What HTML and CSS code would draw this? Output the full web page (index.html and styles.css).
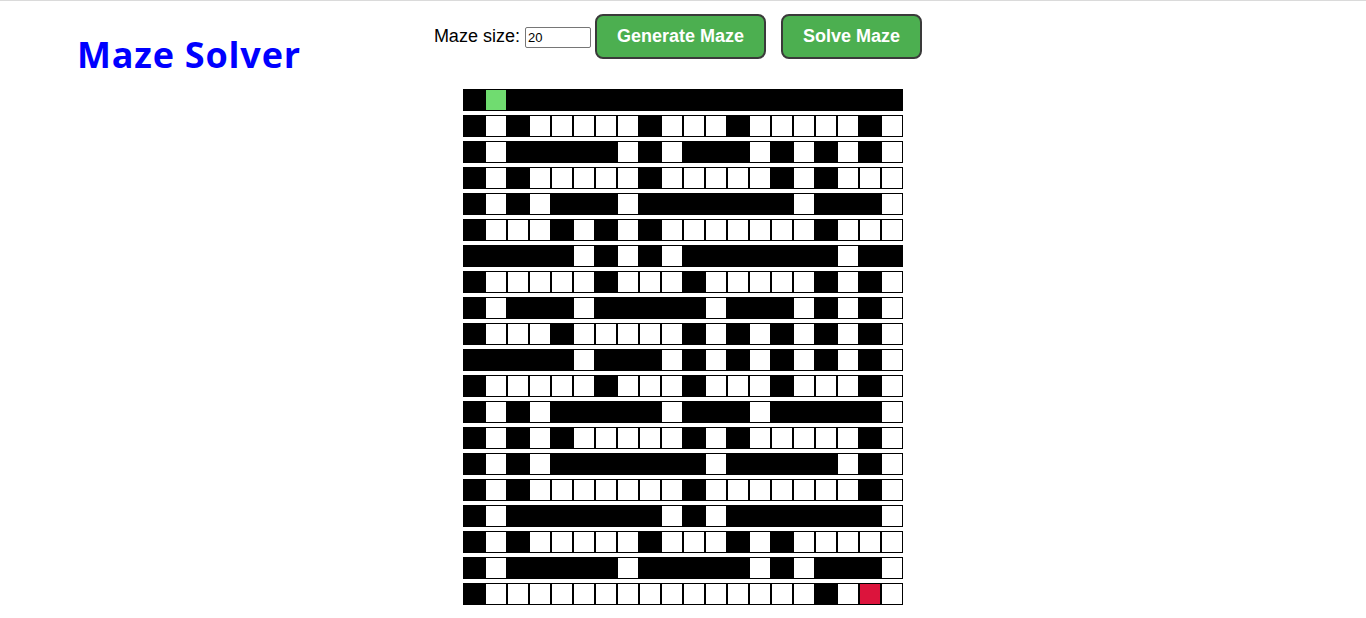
FILE: index.html
```html
<!DOCTYPE html>
<html lang="en">
<head>
<meta charset="utf-8">
<title>Maze Solver</title>
<link rel="stylesheet" href="styles.css">
</head>
<body>
<div class="header">
  <h1 class="title">Maze Solver</h1>
  <div class="controls">
    <label class="size-label" for="size">Maze size:</label>
    <input class="size-input" id="size" type="text" value="20">
    <button class="btn btn-generate">Generate Maze</button>
    <button class="btn btn-solve">Solve Maze</button>
  </div>
</div>
<div class="maze">
  <div class="row"><i></i><i class="start"></i><i></i><i></i><i></i><i></i><i></i><i></i><i></i><i></i><i></i><i></i><i></i><i></i><i></i><i></i><i></i><i></i><i></i><i></i></div>
  <div class="row"><i></i><i class="w"></i><i></i><i class="w"></i><i class="w"></i><i class="w"></i><i class="w"></i><i class="w"></i><i></i><i class="w"></i><i class="w"></i><i class="w"></i><i></i><i class="w"></i><i class="w"></i><i class="w"></i><i class="w"></i><i class="w"></i><i></i><i class="w"></i></div>
  <div class="row"><i></i><i class="w"></i><i></i><i></i><i></i><i></i><i></i><i class="w"></i><i></i><i class="w"></i><i></i><i></i><i></i><i class="w"></i><i></i><i class="w"></i><i></i><i class="w"></i><i></i><i class="w"></i></div>
  <div class="row"><i></i><i class="w"></i><i></i><i class="w"></i><i class="w"></i><i class="w"></i><i class="w"></i><i class="w"></i><i></i><i class="w"></i><i class="w"></i><i class="w"></i><i class="w"></i><i class="w"></i><i></i><i class="w"></i><i></i><i class="w"></i><i class="w"></i><i class="w"></i></div>
  <div class="row"><i></i><i class="w"></i><i></i><i class="w"></i><i></i><i></i><i></i><i class="w"></i><i></i><i></i><i></i><i></i><i></i><i></i><i></i><i class="w"></i><i></i><i></i><i></i><i class="w"></i></div>
  <div class="row"><i></i><i class="w"></i><i class="w"></i><i class="w"></i><i></i><i class="w"></i><i></i><i class="w"></i><i></i><i class="w"></i><i class="w"></i><i class="w"></i><i class="w"></i><i class="w"></i><i class="w"></i><i class="w"></i><i></i><i class="w"></i><i class="w"></i><i class="w"></i></div>
  <div class="row"><i></i><i></i><i></i><i></i><i></i><i class="w"></i><i></i><i class="w"></i><i></i><i class="w"></i><i></i><i></i><i></i><i></i><i></i><i></i><i></i><i class="w"></i><i></i><i></i></div>
  <div class="row"><i></i><i class="w"></i><i class="w"></i><i class="w"></i><i class="w"></i><i class="w"></i><i></i><i class="w"></i><i class="w"></i><i class="w"></i><i></i><i class="w"></i><i class="w"></i><i class="w"></i><i class="w"></i><i class="w"></i><i></i><i class="w"></i><i></i><i class="w"></i></div>
  <div class="row"><i></i><i class="w"></i><i></i><i></i><i></i><i class="w"></i><i></i><i></i><i></i><i></i><i></i><i class="w"></i><i></i><i></i><i></i><i class="w"></i><i></i><i class="w"></i><i></i><i class="w"></i></div>
  <div class="row"><i></i><i class="w"></i><i class="w"></i><i class="w"></i><i></i><i class="w"></i><i class="w"></i><i class="w"></i><i class="w"></i><i class="w"></i><i></i><i class="w"></i><i></i><i class="w"></i><i></i><i class="w"></i><i></i><i class="w"></i><i></i><i class="w"></i></div>
  <div class="row"><i></i><i></i><i></i><i></i><i></i><i class="w"></i><i></i><i></i><i></i><i class="w"></i><i></i><i class="w"></i><i></i><i class="w"></i><i></i><i class="w"></i><i></i><i class="w"></i><i></i><i class="w"></i></div>
  <div class="row"><i></i><i class="w"></i><i class="w"></i><i class="w"></i><i class="w"></i><i class="w"></i><i></i><i class="w"></i><i class="w"></i><i class="w"></i><i></i><i class="w"></i><i class="w"></i><i class="w"></i><i></i><i class="w"></i><i class="w"></i><i class="w"></i><i></i><i class="w"></i></div>
  <div class="row"><i></i><i class="w"></i><i></i><i class="w"></i><i></i><i></i><i></i><i></i><i></i><i class="w"></i><i></i><i></i><i></i><i class="w"></i><i></i><i></i><i></i><i></i><i></i><i class="w"></i></div>
  <div class="row"><i></i><i class="w"></i><i></i><i class="w"></i><i></i><i class="w"></i><i class="w"></i><i class="w"></i><i class="w"></i><i class="w"></i><i></i><i class="w"></i><i></i><i class="w"></i><i class="w"></i><i class="w"></i><i class="w"></i><i class="w"></i><i></i><i class="w"></i></div>
  <div class="row"><i></i><i class="w"></i><i></i><i class="w"></i><i></i><i></i><i></i><i></i><i></i><i></i><i></i><i class="w"></i><i></i><i></i><i></i><i></i><i></i><i class="w"></i><i></i><i class="w"></i></div>
  <div class="row"><i></i><i class="w"></i><i></i><i class="w"></i><i class="w"></i><i class="w"></i><i class="w"></i><i class="w"></i><i class="w"></i><i class="w"></i><i></i><i class="w"></i><i class="w"></i><i class="w"></i><i class="w"></i><i class="w"></i><i class="w"></i><i class="w"></i><i></i><i class="w"></i></div>
  <div class="row"><i></i><i class="w"></i><i></i><i></i><i></i><i></i><i></i><i></i><i></i><i class="w"></i><i></i><i class="w"></i><i></i><i></i><i></i><i></i><i></i><i></i><i></i><i class="w"></i></div>
  <div class="row"><i></i><i class="w"></i><i></i><i class="w"></i><i class="w"></i><i class="w"></i><i class="w"></i><i class="w"></i><i></i><i class="w"></i><i class="w"></i><i class="w"></i><i></i><i class="w"></i><i></i><i class="w"></i><i class="w"></i><i class="w"></i><i class="w"></i><i class="w"></i></div>
  <div class="row"><i></i><i class="w"></i><i></i><i></i><i></i><i></i><i></i><i class="w"></i><i></i><i></i><i></i><i></i><i></i><i class="w"></i><i></i><i class="w"></i><i></i><i></i><i></i><i class="w"></i></div>
  <div class="row"><i></i><i class="w"></i><i class="w"></i><i class="w"></i><i class="w"></i><i class="w"></i><i class="w"></i><i class="w"></i><i class="w"></i><i class="w"></i><i class="w"></i><i class="w"></i><i class="w"></i><i class="w"></i><i class="w"></i><i class="w"></i><i></i><i class="w"></i><i class="end"></i><i class="w"></i></div>
</div>
</body>
</html>
```

FILE: styles.css
```css
html, body {
  margin: 0;
  padding: 0;
  background: #fff;
}

body {
  border-top: 1px solid #dadada;
  font-family: "Liberation Sans", Arial, sans-serif;
  color: #000;
}

.header {
  display: flex;
  align-items: flex-start;
  padding-left: 77px;
  height: 88px;
}

.title {
  margin: 36px 0 0 0;
  font-family: "Open Sans", "Noto Sans", sans-serif;
  font-weight: 700;
  font-size: 36px;
  line-height: 36px;
  letter-spacing: 0.8px;
  color: #0000ff;
  white-space: nowrap;
}

.controls {
  display: flex;
  align-items: center;
  margin-left: 133px;
  margin-top: 13px;
}

.size-label {
  font-size: 18px;
  line-height: 21px;
  margin-right: 5px;
}

.size-input {
  box-sizing: border-box;
  width: 66px;
  height: 21px;
  padding: 1px 2px;
  border: 1px solid #767676;
  border-radius: 2px;
  font-family: "Liberation Sans", Arial, sans-serif;
  font-size: 13px;
  color: #000;
  margin: 1px 4px 0 0;
}

.btn {
  box-sizing: border-box;
  height: 45px;
  padding: 0 20px;
  background: #4caf50;
  color: #fff;
  border: 2px solid #3a3a3a;
  border-radius: 8px;
  font-family: "Liberation Sans", Arial, sans-serif;
  font-weight: 700;
  font-size: 18px;
  cursor: pointer;
}

.btn-generate {
  margin-right: 15px;
}

.maze {
  display: flex;
  flex-direction: column;
  gap: 4px;
  width: 440px;
  margin: 0 auto;
}

.row {
  display: flex;
}

.row i {
  display: block;
  width: 20px;
  height: 20px;
  border: 1px solid #000;
  background: #000;
}

.row i.w {
  background: #fff;
}

.row i.start {
  background: #70dc70;
}

.row i.end {
  background: #dc143c;
}
```
